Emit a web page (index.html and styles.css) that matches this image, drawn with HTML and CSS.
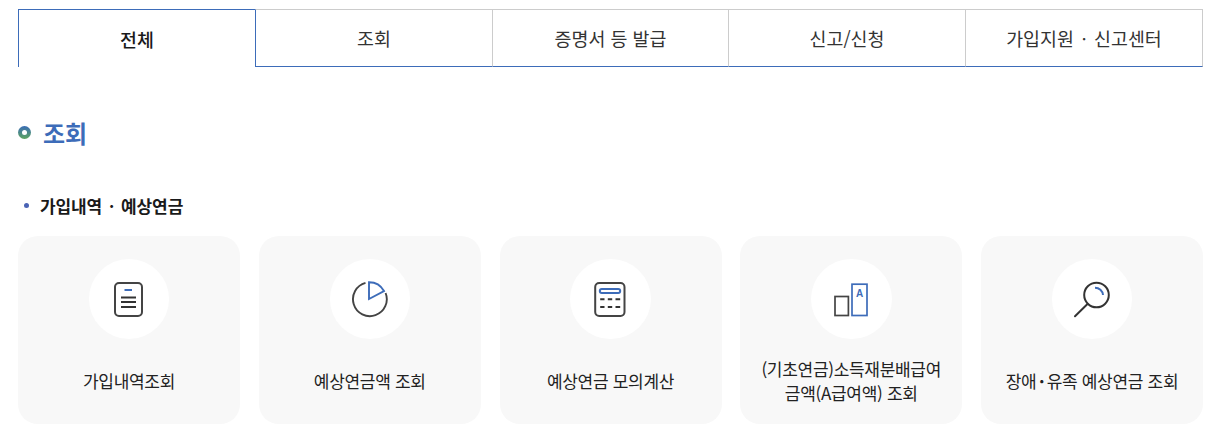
FILE: index.html
```html
<!DOCTYPE html>
<html lang="ko">
<head>
<meta charset="utf-8">
<title>조회</title>
<link rel="stylesheet" href="styles.css">
</head>
<body>
<main class="page">
  <nav class="tabs">
    <a class="tab tab-active">전체</a>
    <a class="tab">조회</a>
    <a class="tab">증명서 등 발급</a>
    <a class="tab">신고/신청</a>
    <a class="tab tab-tight">가입지원 ㆍ 신고센터</a>
  </nav>
  <h2 class="section-title"><span class="ring"></span>조회</h2>
  <h3 class="sub-title"><span class="dot"></span>가입내역 ㆍ 예상연금</h3>
  <ul class="cards">
    <li class="card">
      <span class="icon-circle">
        <svg class="icon" viewBox="0 0 40 40" fill="none" stroke-width="2">
          <rect x="7" y="4" width="27" height="33" rx="4" stroke="#444"/>
          <path d="M16.5 11H24" stroke="#3d6cb9"/>
          <path d="M13 18.5h15M13 23h15M13 28h15" stroke="#333"/>
        </svg>
      </span>
      <span class="card-label">가입내역조회</span>
    </li>
    <li class="card">
      <span class="icon-circle">
        <svg class="icon" viewBox="0 0 40 40" fill="none" stroke-width="1.9">
          <path d="M16.5 3.9A16.9 16.9 0 1 0 36.6 14" stroke="#444"/>
          <path d="M20 3.2V20L35 12A17 17 0 0 0 20 3.2z" stroke="#3d6cb9"/>
        </svg>
      </span>
      <span class="card-label">예상연금액 조회</span>
    </li>
    <li class="card">
      <span class="icon-circle">
        <svg class="icon" viewBox="0 0 40 40" fill="none" stroke-width="2">
          <rect x="5.2" y="4" width="29.3" height="33" rx="4" stroke="#444"/>
          <rect x="9.8" y="10" width="20.4" height="4" rx="2" stroke="#3d6cb9"/>
          <path d="M10.2 20.3h4.3M17.8 20.3h4.4M25.5 20.3h4.7M10.2 28h4.3M17.8 28h4.4M25.5 28h4.7" stroke="#333"/>
        </svg>
      </span>
      <span class="card-label">예상연금 모의계산</span>
    </li>
    <li class="card">
      <span class="icon-circle">
        <svg class="icon" viewBox="0 0 40 40" fill="none" stroke-width="1.7">
          <rect x="4" y="17.5" width="13.4" height="19" stroke="#444"/>
          <rect x="21" y="5.2" width="15" height="31.3" stroke="#3d6cb9"/>
          <text class="icon-letter" x="28.5" y="17.7">A</text>
        </svg>
      </span>
      <span class="card-label">(기초연금)소득재분배급여<br>금액(A급여액) 조회</span>
    </li>
    <li class="card">
      <span class="icon-circle">
        <svg class="icon" viewBox="0 0 40 40" fill="none" stroke-width="2">
          <circle cx="25.5" cy="16" r="12.3" stroke="#333"/>
          <path d="M16.5 25L4 37.2" stroke="#333" stroke-linecap="round"/>
          <path d="M24 8.7A8 8 0 0 1 32 16" stroke="#3d6cb9"/>
        </svg>
      </span>
      <span class="card-label"><span>장애<b class="label-dot">·</b>유족 예상연금 조회</span></span>
    </li>
  </ul>
</main>
</body>
</html>
```
FILE: styles.css
```css
* { box-sizing: border-box; }
html, body { margin: 0; padding: 0; background: #fff; }
body {
  font-family: "Noto Sans CJK KR", "Noto Sans", "Liberation Sans", sans-serif;
  color: #1a1a1a;
  overflow: hidden;
}
.page { padding: 9px 16px 0 18px; }
.tabs {
  display: grid;
  grid-template-columns: 237px 237px 236px 237px 238px;
  height: 58px;
}
.tab {
  display: flex;
  align-items: center;
  justify-content: center;
  font-size: 18.4px;
  color: #333;
  border-top: 1px solid #ccc;
  border-left: 1px solid #ccc;
  border-bottom: 1px solid #3d6cb9;
}
.tab:last-child { border-right: 1px solid #ccc; }
.tab-tight { word-spacing: -3.5px; }
.tab-active {
  font-weight: 500;
  color: #1a1a1a;
  border: 1px solid #3d6cb9;
  border-right: 0;
  border-bottom: 0;
}
.tab-active + .tab { border-left-color: #3d6cb9; }
.section-title {
  display: flex;
  align-items: center;
  gap: 12px;
  margin: 46px 0 0;
  height: 38px;
  font-size: 24px;
  font-weight: 700;
  color: #3d6cb9;
}
.ring {
  display: flex;
  align-items: center;
  justify-content: center;
  width: 13px;
  height: 13px;
  margin-top: 1px;
  border-radius: 50%;
  background: linear-gradient(#3a6cb5, #5da55f);
}
.ring::after {
  content: "";
  width: 5px;
  height: 5px;
  border-radius: 50%;
  background: #fff;
}
.sub-title {
  display: flex;
  align-items: center;
  margin: 42px 0 0;
  padding-left: 6px;
  height: 24px;
  font-size: 17px;
  font-weight: 700;
  letter-spacing: -0.1px;
  word-spacing: -3px;
  color: #1a1a1a;
}
.dot {
  width: 5px;
  height: 5px;
  margin-right: 11px;
  border-radius: 50%;
  background: #4a63b5;
}
.cards {
  list-style: none;
  display: grid;
  grid-template-columns: repeat(5, 222px);
  justify-content: space-between;
  margin: 19px 0 0;
  padding: 0;
}
.card {
  display: flex;
  flex-direction: column;
  align-items: center;
  height: 188px;
  padding-top: 23px;
  border-radius: 20px;
  background: #f8f8f8;
}
.icon-circle {
  display: flex;
  align-items: center;
  justify-content: center;
  width: 80.5px;
  height: 80px;
  border-radius: 50%;
  background: #fff;
}
.icon { width: 40px; height: 40px; margin-right: 1.5px; }
.icon-letter {
  font-family: "Liberation Sans", sans-serif;
  font-size: 10px;
  font-weight: 700;
  fill: #3d6cb9;
  text-anchor: middle;
}
.card-label {
  flex: 1;
  display: flex;
  align-items: center;
  text-align: center;
  margin-bottom: 2px;
  font-size: 17px;
  line-height: 24px;
  letter-spacing: -0.3px;
  color: #222;
}
.label-dot {
  padding: 0 2.5px;
  font-weight: 700;
}
```
